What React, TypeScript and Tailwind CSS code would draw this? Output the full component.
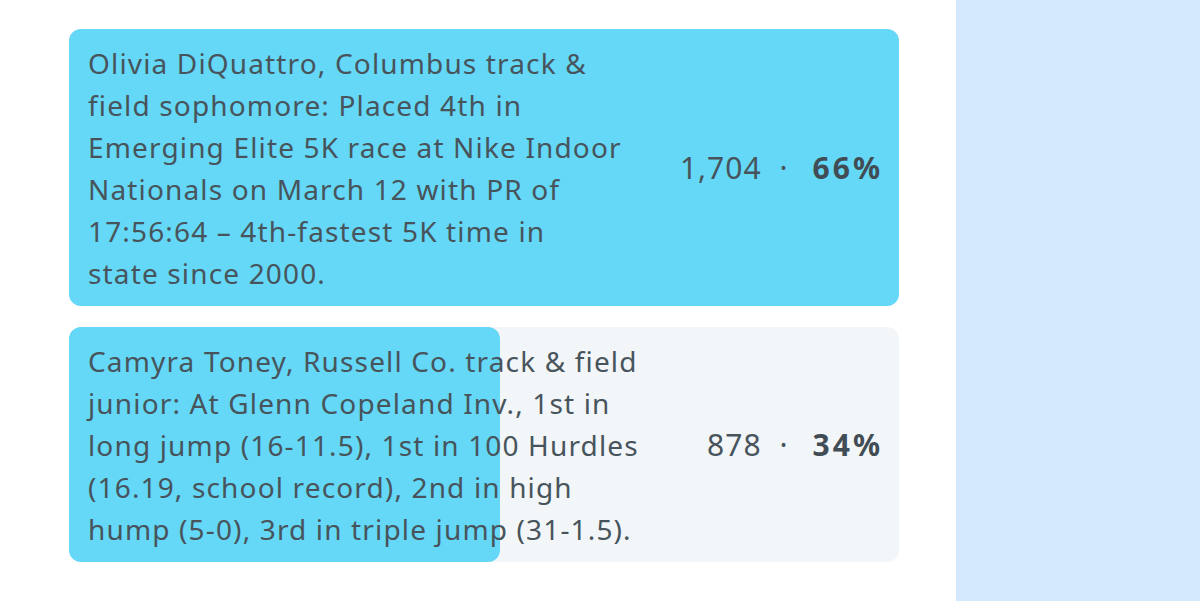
export default function App() {
  const rows = [
    {
      lines: [
        "Olivia DiQuattro, Columbus track &",
        "field sophomore: Placed 4th in",
        "Emerging Elite 5K race at Nike Indoor",
        "Nationals on March 12 with PR of",
        "17:56:64 – 4th-fastest 5K time in",
        "state since 2000.",
      ],
      votes: "1,704",
      pct: "66%",
      barClass: "w-full",
    },
    {
      lines: [
        "Camyra Toney, Russell Co. track & field",
        "junior: At Glenn Copeland Inv., 1st in",
        "long jump (16-11.5), 1st in 100 Hurdles",
        "(16.19, school record), 2nd in high",
        "hump (5-0), 3rd in triple jump (31-1.5).",
      ],
      votes: "878",
      pct: "34%",
      barClass: "w-[431px]",
    },
  ];

  return (
    <div
      className="flex w-[1200px] h-[601px] bg-white overflow-hidden"
      style={{ fontFamily: "'Noto Sans', Lato, sans-serif" }}
    >
      <div className="w-[956px] pl-[69px] pr-[57px] pt-[29px] flex flex-col gap-[21px]">
        {rows.map((r) => (
          <div
            key={r.votes}
            className="relative flex items-center justify-between rounded-xl bg-[#f2f6f8] px-[19px] pt-[13px] pb-[12px]"
          >
            <div
              className={`absolute left-0 top-0 bottom-0 rounded-xl bg-[#64d8f6] ${r.barClass}`}
            />
            <p className="relative text-[28px] leading-[42px] tracking-[1.15px] text-[#48545c] [font-variant-ligatures:none] whitespace-nowrap">
              {r.lines.map((l) => (
                <span key={l} className="block">
                  {l}
                </span>
              ))}
            </p>
            <div className="relative flex items-center text-[30px] leading-[42px] tracking-[1px] text-[#48545c]">
              <span>{r.votes}</span>
              <span className="ml-[18px] mr-[24px]">·</span>
              <span className="font-bold tracking-[3px] -mr-[3px] text-[#414c54]">{r.pct}</span>
            </div>
          </div>
        ))}
      </div>
      <div className="flex-1 bg-[#d5e9fe]" />
    </div>
  );
}
